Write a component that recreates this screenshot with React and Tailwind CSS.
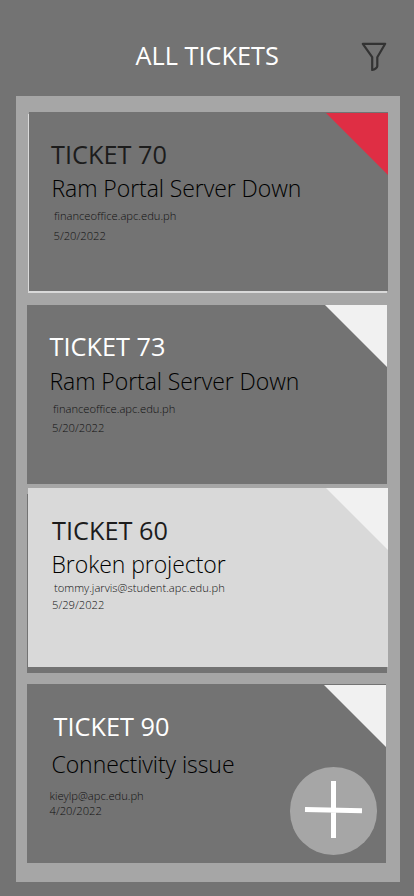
const tickets = [
  {
    title: 'TICKET 70', subject: 'Ram Portal Server Down', email: 'financeoffice.apc.edu.ph', date: '5/20/2022',
    card: 'ml-[13px] w-[359px] bg-[#737373] shadow-[-1px_2px_0_#d9d9d9]',
    flag: 'top-px text-[#df2e44]',
    titleCls: 'mt-[25px] ml-[22px] text-[#1c1c1c]', subjectCls: 'mt-[3px] ml-[22.5px]',
    emailCls: 'mt-[7px] ml-[25px]', dateCls: 'mt-[6px] ml-[24.5px]',
  },
  {
    title: 'TICKET 73', subject: 'Ram Portal Server Down', email: 'financeoffice.apc.edu.ph', date: '5/20/2022',
    card: 'mt-[14px] ml-[11px] w-[360px] bg-[#737373]',
    flag: 'top-0 text-[#f1f1f1]',
    titleCls: 'mt-[24px] ml-[22.5px] text-white', subjectCls: 'mt-[4px] ml-[22.5px]',
    emailCls: 'mt-[7px] ml-[26px]', dateCls: 'mt-[5px] ml-[25px]',
  },
  {
    title: 'TICKET 60', subject: 'Broken projector', email: 'tommy.jarvis@student.apc.edu.ph', date: '5/29/2022',
    card: 'mt-[4px] ml-[12px] w-[360px] bg-[#d9d9d9] shadow-[-1px_6px_0_#737373]',
    flag: 'top-0 text-[#f1f1f1]',
    titleCls: 'mt-[25px] ml-[24px] text-[#1c1c1c]', subjectCls: 'mt-[3px] ml-[23.5px]',
    emailCls: 'mt-[3px] ml-[26px]', dateCls: 'mt-[3px] ml-[24px]',
  },
  {
    title: 'TICKET 90', subject: 'Connectivity issue', email: 'kieylp@apc.edu.ph', date: '4/20/2022',
    card: 'mt-[17px] ml-[11px] w-[359px] bg-[#737373]',
    flag: 'top-px text-[#f1f1f1]',
    titleCls: 'mt-[25px] ml-[26.5px] text-white', subjectCls: 'mt-[7px] ml-[24.5px]',
    emailCls: 'mt-[11px] ml-[22.5px]', dateCls: 'mt-px ml-[22.5px]',
  },
];

function TicketCard({ ticket }) {
  return (
    <article className={`relative flex h-[179px] flex-col whitespace-nowrap ${ticket.card}`}>
      <svg className={`absolute right-0 h-[62px] w-[62px] ${ticket.flag}`} viewBox="0 0 62 62" fill="currentColor">
        <path d="M0 0H62V62Z" />
      </svg>
      <h2 className={`text-[25.3px] leading-[34px] ${ticket.titleCls}`}>{ticket.title}</h2>
      <p className={`text-[23px] font-light leading-[28px] tracking-[-0.07px] text-black ${ticket.subjectCls}`}>{ticket.subject}</p>
      <p className={`text-[11.2px] font-light leading-[14px] text-[#111] ${ticket.emailCls}`}>{ticket.email}</p>
      <p className={`text-[11.2px] font-light leading-[14px] text-[#111] ${ticket.dateCls}`}>{ticket.date}</p>
    </article>
  );
}

export default function App() {
  return (
    <div className="relative h-[896px] w-[414px] overflow-hidden bg-[#737373] font-['Open_Sans',sans-serif]">
      <header className="flex h-[96px] items-start">
        <h1 className="mt-[38px] ml-[135.5px] whitespace-nowrap text-[25.3px] leading-[34px] text-white">ALL TICKETS</h1>
        <button className="mt-[42px] mr-[27px] ml-auto" aria-label="Filter tickets">
          <svg className="block h-[30px] w-[26px]" viewBox="0 0 26 30" fill="none" stroke="#333" strokeWidth="2.2" strokeLinejoin="round">
            <path d="M1.8 1.8H24.2L16.3 15.2V24.2C16.3 25.3 14 27.6 11.2 28V15.2Z" />
          </svg>
        </button>
      </header>
      <main className="ml-4 flex h-[786px] w-[384px] flex-col bg-[#a6a6a6] pt-4">
        {tickets.map((ticket) => (
          <TicketCard key={ticket.title} ticket={ticket} />
        ))}
      </main>
      <button className="absolute top-[767px] left-[290px] h-[88px] w-[87px] rounded-full bg-[#a6a6a6]" aria-label="Add ticket">
        <svg className="block h-[88px] w-[87px]" viewBox="0 0 87 88" stroke="#fff" strokeWidth="5">
          <path d="M43.5 14V71M15 42.6L72 43.8" />
        </svg>
      </button>
    </div>
  );
}
